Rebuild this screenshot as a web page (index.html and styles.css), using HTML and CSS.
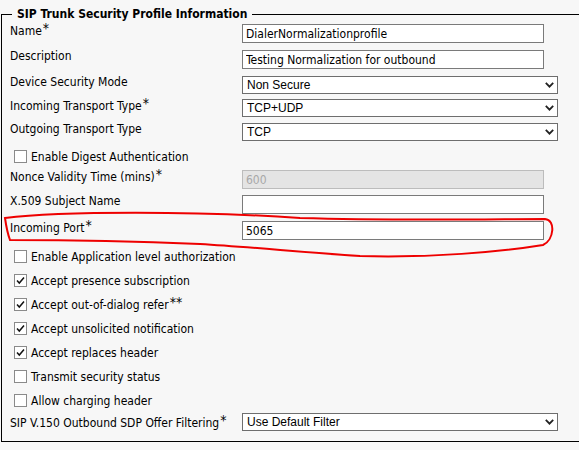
FILE: index.html
```html
<!DOCTYPE html>
<html>
<head>
<meta charset="utf-8">
<link rel="stylesheet" href="styles.css">
</head>
<body>
<fieldset class="box">
  <legend class="legend">SIP Trunk Security Profile Information</legend>

  <div class="row r-name"><span class="lbl">Name<span class="req">*</span></span><input class="txt" value="DialerNormalizationprofile"></div>
  <div class="row r-gap7"><span class="lbl">Description</span><input class="txt" value="Testing Normalization for outbound"></div>
  <div class="row r-gap7 sel-row"><span class="lbl">Device Security Mode</span><div class="select"><span>Non Secure</span><svg class="chev" width="9" height="6" viewBox="0 0 9 6"><path d="M0.8 0.8 L4.5 4.6 L8.2 0.8" fill="none" stroke="#222" stroke-width="1.8"/></svg></div></div>
  <div class="row r-gap5 sel-row"><span class="lbl">Incoming Transport Type<span class="req">*</span></span><div class="select"><span>TCP+UDP</span><svg class="chev" width="9" height="6" viewBox="0 0 9 6"><path d="M0.8 0.8 L4.5 4.6 L8.2 0.8" fill="none" stroke="#222" stroke-width="1.8"/></svg></div></div>
  <div class="row r-gap6 sel-row"><span class="lbl">Outgoing Transport Type</span><div class="select"><span>TCP</span><svg class="chev" width="9" height="6" viewBox="0 0 9 6"><path d="M0.8 0.8 L4.5 4.6 L8.2 0.8" fill="none" stroke="#222" stroke-width="1.8"/></svg></div></div>

  <div class="chk-row r-gap9"><span class="cb"></span><span>Enable Digest Authentication</span></div>

  <div class="row r-gap7"><span class="lbl">Nonce Validity Time (mins)<span class="req">*</span></span><input class="txt dis" value="600" disabled></div>
  <div class="row r-gap6"><span class="lbl">X.509 Subject Name</span><input class="txt" value=""></div>
  <div class="row r-gap7"><span class="lbl">Incoming Port<span class="req">*</span></span><input class="txt" value="5065"></div>

  <div class="chk-row r-gap10"><span class="cb"></span><span>Enable Application level authorization</span></div>
  <div class="chk-row r-gap11"><span class="cb"><svg width="11" height="11" viewBox="0 0 11 11"><path d="M2 5.5 L4.3 8 L9 2.5" fill="none" stroke="#111" stroke-width="1.5"/></svg></span><span>Accept presence subscription</span></div>
  <div class="chk-row r-gap11"><span class="cb"><svg width="11" height="11" viewBox="0 0 11 11"><path d="M2 5.5 L4.3 8 L9 2.5" fill="none" stroke="#111" stroke-width="1.5"/></svg></span><span>Accept out-of-dialog refer<span class="req">**</span></span></div>
  <div class="chk-row r-gap11"><span class="cb"><svg width="11" height="11" viewBox="0 0 11 11"><path d="M2 5.5 L4.3 8 L9 2.5" fill="none" stroke="#111" stroke-width="1.5"/></svg></span><span>Accept unsolicited notification</span></div>
  <div class="chk-row r-gap11"><span class="cb"><svg width="11" height="11" viewBox="0 0 11 11"><path d="M2 5.5 L4.3 8 L9 2.5" fill="none" stroke="#111" stroke-width="1.5"/></svg></span><span>Accept replaces header</span></div>
  <div class="chk-row r-gap11"><span class="cb"></span><span>Transmit security status</span></div>
  <div class="chk-row r-gap11"><span class="cb"></span><span>Allow charging header</span></div>

  <div class="row r-gap6 sel-row last"><span class="lbl">SIP V.150 Outbound SDP Offer Filtering<span class="req">*</span></span><div class="select"><span>Use Default Filter</span><svg class="chev" width="9" height="6" viewBox="0 0 9 6"><path d="M0.8 0.8 L4.5 4.6 L8.2 0.8" fill="none" stroke="#222" stroke-width="1.8"/></svg></div></div>
</fieldset>

<svg class="scribble" width="579" height="450" viewBox="0 0 579 450">
  <path d="M5 218 C60 211, 200 211, 300 218 C400 221, 500 219, 545 219 C556 220, 554 240, 543 245 C500 252, 430 258, 360 256 C300 252, 250 247, 200 244 C130 241, 60 240, 10 240 C7 232, 6 225, 5 218 Z" fill="none" stroke="#ee0000" stroke-width="2"/>
</svg>
</body>
</html>
```

FILE: styles.css
```css
html, body {
  margin: 0;
  padding: 0;
  background: #f7f7f7;
  overflow: hidden;
  width: 579px;
  height: 450px;
}

body {
  position: relative;
  font-family: "DejaVu Sans Condensed", "DejaVu Sans", sans-serif;
  font-size: 12px;
  line-height: 14px;
  color: #000;
}

.box {
  margin: 7px 0 0 1px;
  padding: 3px 0 10px 8px;
  border: 1px solid #000;
  border-right: none;
  width: 578px;
  box-sizing: border-box;
  min-width: 0;
}

.legend {
  font-weight: bold;
  margin-left: 2px;
  padding: 0 5px;
  line-height: 14px;
}

.row {
  display: flex;
  align-items: flex-start;
}

.lbl {
  width: 232px;
  flex: none;
  margin-top: -1px;
  white-space: nowrap;
}

.sel-row.last {
  align-items: center;
}
.sel-row.last .lbl {
  margin-top: 0;
}

.req {
  position: relative;
  top: -2px;
  margin-left: 1px;
  font-size: 14px;
}

.txt {
  width: 302px;
  height: 19px;
  box-sizing: border-box;
  border: 1px solid #7a7a7a;
  background: #fff;
  padding: 0 3px;
  margin: 0;
  font-family: "DejaVu Sans Condensed", "DejaVu Sans", sans-serif;
  font-size: 12px;
  color: #000;
  outline: none;
}

.txt.dis {
  background: #e4e4e4;
  border-color: #bcbcbc;
  color: #a8a8a8;
}

.select {
  width: 316px;
  height: 18px;
  box-sizing: border-box;
  border: 1px solid #6e6e6e;
  background: #fff;
  display: flex;
  align-items: center;
  justify-content: space-between;
  padding: 0 3px 0 4px;
  font-family: "Liberation Sans", Arial, sans-serif;
  font-size: 12px;
}

.chev {
  display: block;
}

.chk-row {
  display: flex;
  align-items: center;
  height: 13px;
  padding-left: 4px;
  gap: 4px;
  white-space: nowrap;
}

.cb {
  width: 13px;
  height: 13px;
  box-sizing: border-box;
  border: 1px solid #8a8a8a;
  background: #fff;
  flex: none;
  display: flex;
  align-items: center;
  justify-content: center;
}

.cb svg {
  display: block;
}

.r-name { margin-top: 0; }
.r-gap5 { margin-top: 5px; }
.r-gap6 { margin-top: 6px; }
.r-gap7 { margin-top: 7px; }
.r-gap9 { margin-top: 9px; }
.r-gap10 { margin-top: 10px; }
.r-gap11 { margin-top: 11px; }

.scribble {
  position: absolute;
  left: 0;
  top: 0;
  pointer-events: none;
}
```
